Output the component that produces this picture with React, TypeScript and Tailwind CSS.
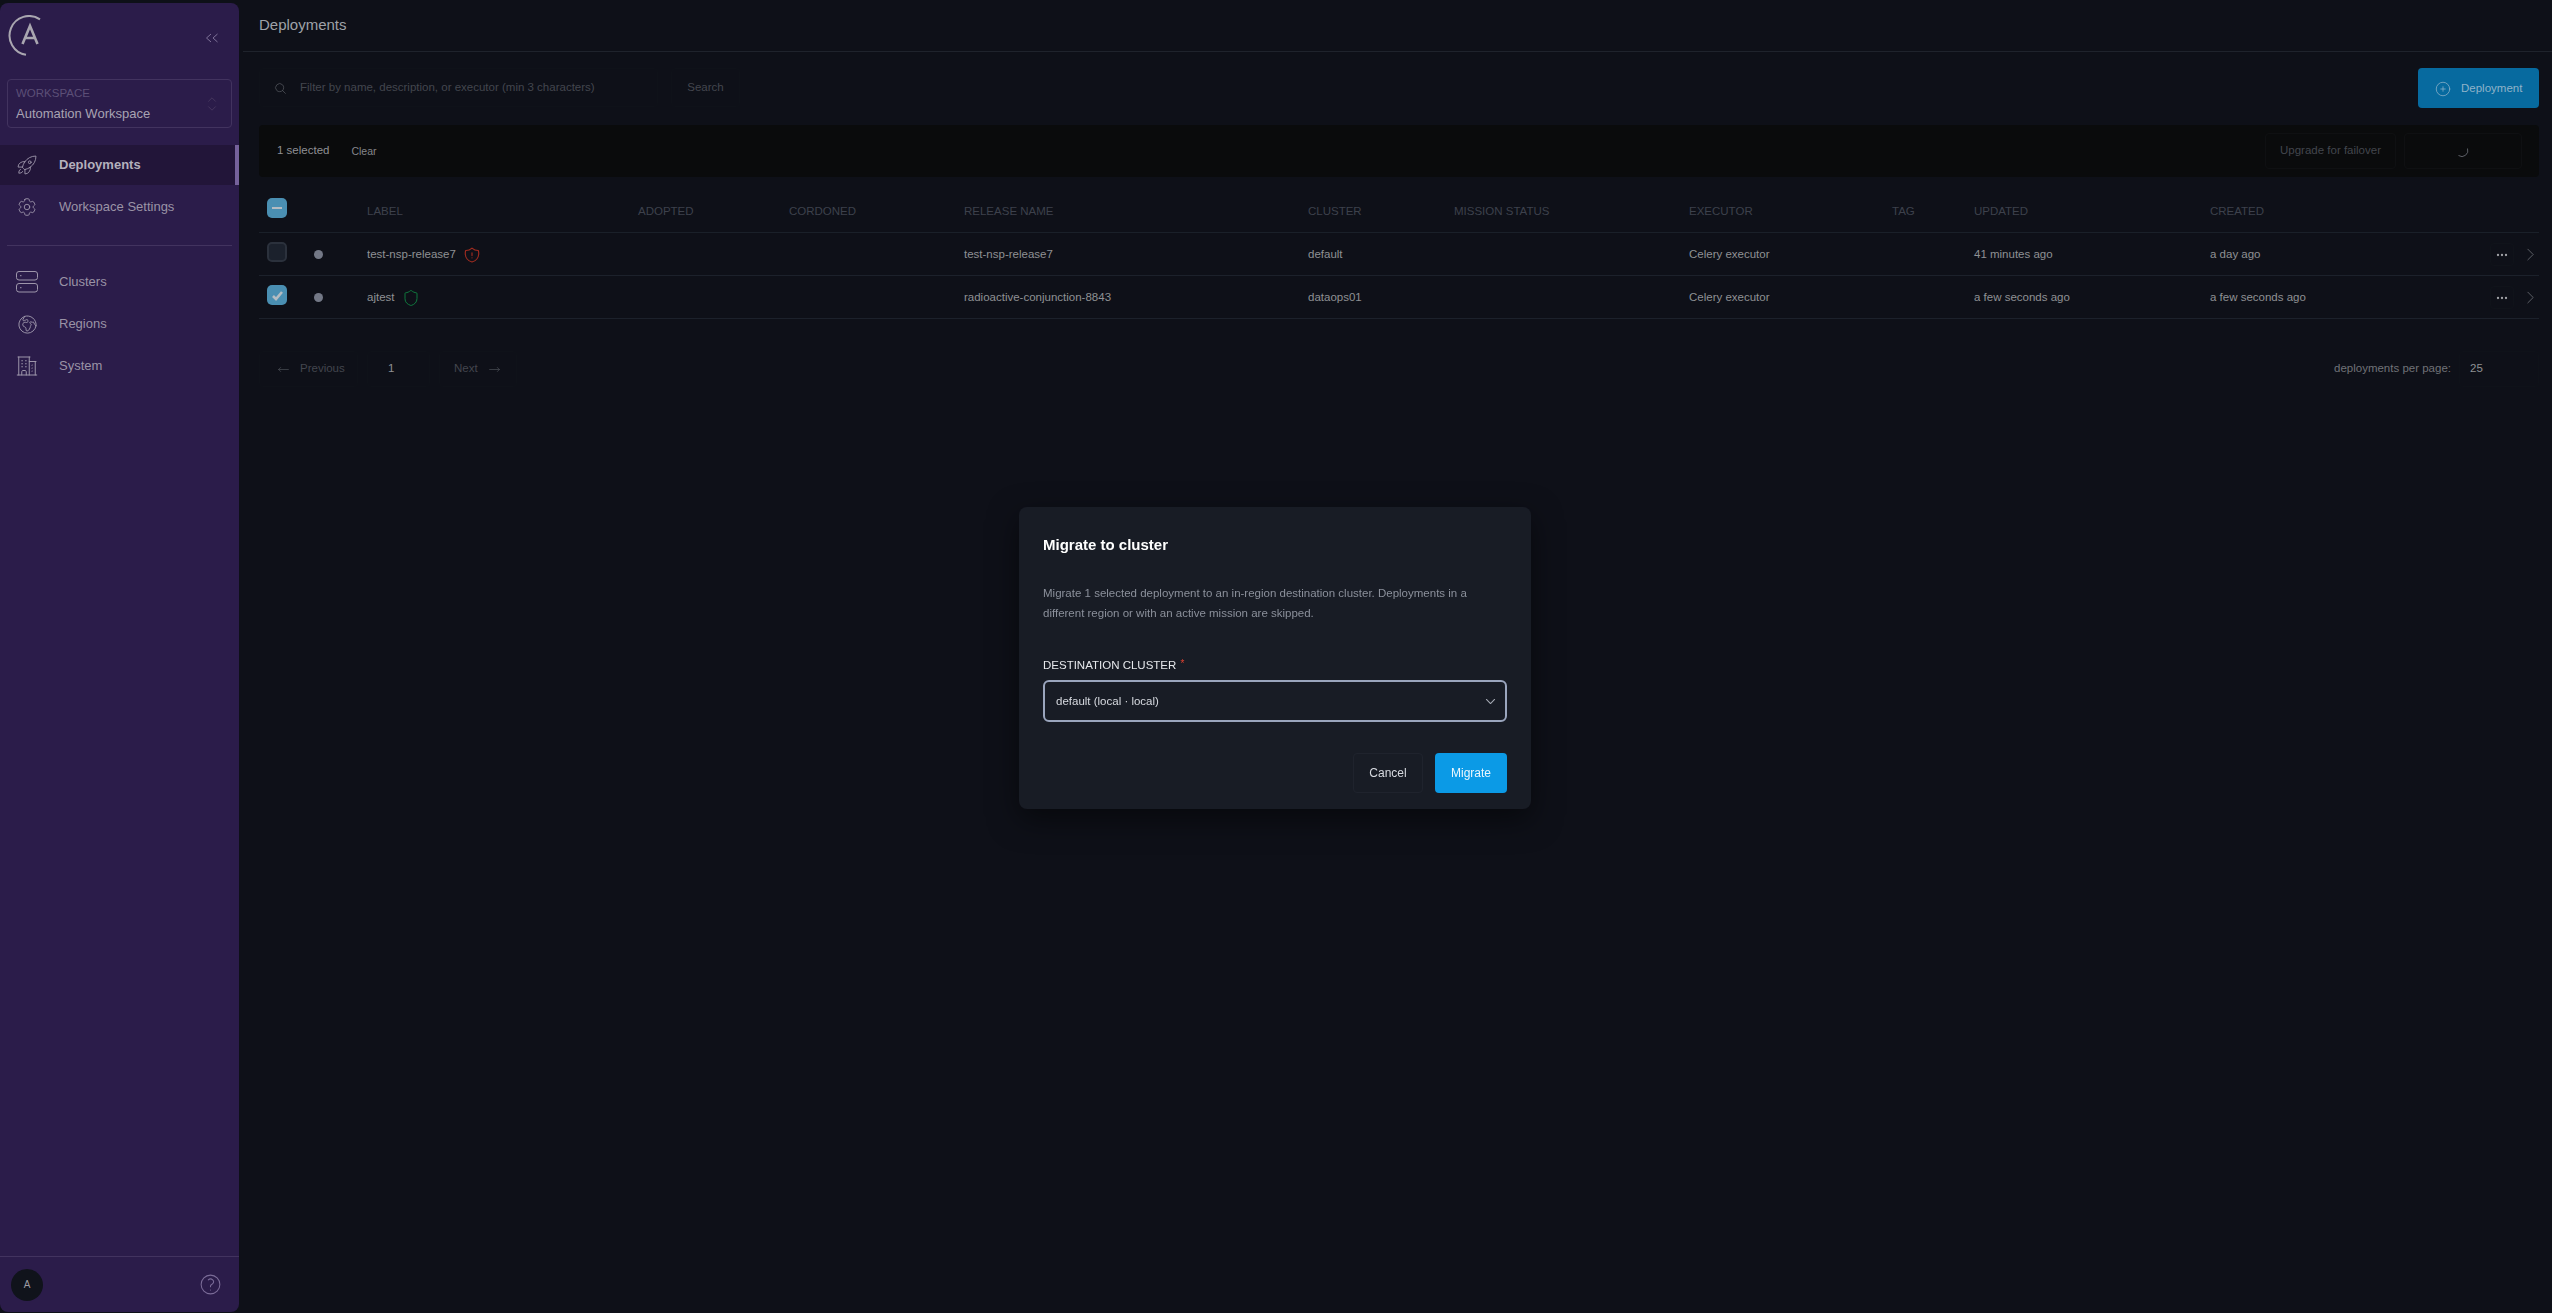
import React from 'react';
import { Shield } from 'lucide-react';
import {
  HiOutlineArrowLongLeft,
  HiOutlineArrowLongRight,
  HiOutlineBuildingOffice2,
  HiOutlineChevronDown,
  HiOutlineChevronRight,
  HiOutlineChevronUpDown,
  HiOutlineCog6Tooth,
  HiOutlineEllipsisHorizontal,
  HiOutlineGlobeEuropeAfrica,
  HiOutlineMagnifyingGlass,
  HiOutlinePlusCircle,
  HiOutlineQuestionMarkCircle,
  HiOutlineRocketLaunch,
  HiOutlineShieldExclamation,
} from 'react-icons/hi2';

const gridCols = 'grid grid-cols-[108px_271px_151px_175px_344px_146px_235px_203px_82px_236px_1fr]';

const Logo: React.FC = () => (
  <svg width="34" height="42" viewBox="8 14 34 42" fill="none" stroke="#a9a6b0" strokeWidth="2" className="ml-2">
    <path d="M40 18.400A19.500 19.500 0 1 0 26 53.800" />
    <path strokeWidth="2.600" d="M22.500 43 30 25l7.500 18M25 37h10" />
  </svg>
);

const ServerIcon: React.FC = () => (
  <svg width="24" height="24" viewBox="0 0 24 24" fill="none" stroke="currentColor" strokeWidth="1">
    <rect x="1.500" y="1.500" width="21" height="8.500" rx="2.500" />
    <rect x="1.500" y="13.500" width="21" height="8.500" rx="2.500" />
    <path d="M5 5.700h1.500M5 17.700h1.500" />
  </svg>
);

const CollapseIcon: React.FC = () => (
  <svg width="14" height="10" viewBox="0 0 14 10" fill="none" stroke="#7f7299" strokeWidth="1" className="mt-1">
    <path d="M6 1 1.500 5 6 9M12.500 1 8 5l4.500 4" />
  </svg>
);

interface NavItemProps {
  icon: React.ReactNode;
  label: string;
  active?: boolean;
}

const NavItem: React.FC<NavItemProps> = ({ icon, label, active = false }) => (
  <div
    className={`relative flex h-10 items-center text-[13px] ${
      active ? 'bg-[#221539] font-bold text-[#b4b0bc]' : 'text-[#9a93a6]'
    }`}
  >
    <span className="flex w-[59px] justify-center pr-[5px] text-[#9d95aa]">{icon}</span>
    {label}
    {active && <span className="absolute right-0 top-0 h-full w-1 bg-[#75619b]" />}
  </div>
);

const Sidebar: React.FC = () => (
  <aside className="mb-[1px] mt-[3px] flex w-[239px] shrink-0 flex-col rounded-lg bg-[#2b1c4a] pt-3">
    <div className="flex items-center justify-between pr-[20px]">
      <Logo />
      <CollapseIcon />
    </div>
    <div className="mx-[7px] mt-[22px] flex h-[49px] items-center justify-between rounded border border-[#42335f] px-2">
      <div>
        <div className="text-[11.500px] leading-[16px] text-[#5c4f77]">WORKSPACE</div>
        <div className="mt-1 text-[13px] leading-[18px] text-[#a8a3b2]">Automation Workspace</div>
      </div>
      <HiOutlineChevronUpDown className="text-[#47385f]" size={22} strokeWidth={1} />
    </div>
    <nav className="mt-[17px] flex flex-col gap-[2px]">
      <NavItem active icon={<HiOutlineRocketLaunch size={22} strokeWidth={1} />} label="Deployments" />
      <NavItem icon={<HiOutlineCog6Tooth size={22} strokeWidth={1} />} label="Workspace Settings" />
    </nav>
    <div className="mx-[7px] mb-4 mt-[18px] border-t border-[#42335f]" />
    <nav className="flex flex-col gap-[2px]">
      <NavItem icon={<ServerIcon />} label="Clusters" />
      <NavItem icon={<HiOutlineGlobeEuropeAfrica size={23} strokeWidth={1} />} label="Regions" />
      <NavItem icon={<HiOutlineBuildingOffice2 size={24} strokeWidth={1} />} label="System" />
    </nav>
    <div className="mt-auto flex h-[56px] items-center justify-between border-t border-[#42335f] pl-[11px] pr-4">
      <div className="flex h-8 w-8 items-center justify-center rounded-full bg-[#10131b] text-[10px] text-[#9c9ca2]">A</div>
      <HiOutlineQuestionMarkCircle className="text-[#7b6c98]" size={25} strokeWidth={1} />
    </div>
  </aside>
);

const HeaderCell: React.FC<{ children?: React.ReactNode }> = ({ children }) => (
  <div className="pt-[1px] text-[11.500px] text-[#3d414c]">{children}</div>
);

interface RowData {
  label: string;
  ok: boolean;
  checked: boolean;
  release: string;
  cluster: string;
  updated: string;
  created: string;
}

const rows: RowData[] = [
  {
    label: 'test-nsp-release7',
    ok: false,
    checked: false,
    release: 'test-nsp-release7',
    cluster: 'default',
    updated: '41 minutes ago',
    created: 'a day ago',
  },
  {
    label: 'ajtest',
    ok: true,
    checked: true,
    release: 'radioactive-conjunction-8843',
    cluster: 'dataops01',
    updated: 'a few seconds ago',
    created: 'a few seconds ago',
  },
];

const Row: React.FC<{ row: RowData }> = ({ row }) => (
  <div className={`${gridCols} h-[43px] items-center border-b border-[#1c212b] pt-[1px] text-[11.500px] text-[#8f9094]`}>
    <div className="flex items-center">
      {row.checked ? (
        <span className="mb-[5px] ml-2 flex h-5 w-5 items-center justify-center rounded-[5px] bg-[#4a8fb2]">
          <svg width="13" height="13" viewBox="0 0 13 13" fill="none" stroke="#b5bcc2" strokeWidth="2.600">
            <path d="m2 7 3 3 6-7" />
          </svg>
        </span>
      ) : (
        <span className="mb-[5px] ml-2 h-5 w-5 rounded-[5px] border-2 border-[#2b313c] bg-[#1b212c]" />
      )}
      <span className="mb-[1px] ml-[27px] h-[9px] w-[9px] rounded-full bg-[#737886]" />
    </div>
    <div className="flex items-center gap-[7px]">
      {row.label}
      {row.ok ? (
        <Shield className="text-[#0f7a3f]" size={18} strokeWidth={1.300} />
      ) : (
        <HiOutlineShieldExclamation className="text-[#a32c20]" size={18} strokeWidth={1.500} />
      )}
    </div>
    <div />
    <div />
    <div>{row.release}</div>
    <div>{row.cluster}</div>
    <div />
    <div>Celery executor</div>
    <div />
    <div>{row.updated}</div>
    <div className="flex items-center justify-between">
      {row.created}
      <div className="flex items-center">
        <span className="flex h-[23px] w-6 items-center justify-center rounded border border-[#10131a] text-[#a5a6aa]">
          <HiOutlineEllipsisHorizontal size={16} strokeWidth={2} />
        </span>
        <HiOutlineChevronRight className="ml-2 text-[#7b7e85]" size={17} strokeWidth={1} />
      </div>
    </div>
  </div>
);

const Main: React.FC = () => (
  <main className="ml-1 flex min-w-0 flex-1 flex-col">
    <header className="flex h-[52px] items-center border-b border-[#1f232c] pl-4 text-[15px] text-[#9fa2a8]">Deployments</header>
    <div className="pl-4 pr-[13px]">
      <div className="mt-4 flex items-start">
        <div className="flex h-[39px] w-[399px] items-center rounded border border-[#0f1219] pl-[14px] pt-[1px] text-[11.500px] text-[#43464e]">
          <HiOutlineMagnifyingGlass className="mr-[13px] text-[#4d5058]" size={13} strokeWidth={1.500} />
          Filter by name, description, or executor (min 3 characters)
        </div>
        <div className="ml-[13px] flex h-[39px] w-[69px] items-center justify-center rounded border border-[#0f1219] pt-[1px] text-[11.500px] text-[#43464e]">Search</div>
        <button className="ml-auto flex h-10 w-[121px] items-center rounded bg-[#076a9f] pl-4 pt-[1px] text-[11.500px] text-[#8fb3c9]">
          <HiOutlinePlusCircle className="mr-[9px] text-[#8fb3c9]" size={18} strokeWidth={1} />
          Deployment
        </button>
      </div>
      <div className="mt-[17px] flex h-[52px] items-center rounded bg-[#0a0b0c] pl-[18px] pr-[17px] text-[11.500px]">
        <span className="text-[#8f9094]">1 selected</span>
        <span className="ml-[22px] mt-[2px] text-[10.500px] text-[#85868a]">Clear</span>
        <div className="ml-auto flex h-9 w-[131px] items-center justify-center rounded border border-[#0f1012] text-[#43464c]">Upgrade for failover</div>
        <div className="ml-2 flex h-9 w-[118px] items-center justify-center rounded border border-[#0f1012]">
          <svg width="14" height="14" viewBox="0 0 14 14" fill="none" stroke="#5c5f66" strokeWidth="1">
            <path d="M2.500 11.500a6 6 0 0 0 9-7" />
          </svg>
        </div>
      </div>
      <div className="mt-[13px]">
        <div className={`${gridCols} h-[43px] items-center border-b border-[#1a2029]`}>
          <div>
            <span className="mb-[6px] ml-2 flex h-5 w-5 items-center justify-center rounded-[5px] bg-[#4a8fb2]">
              <span className="h-[2px] w-[10px] bg-[#b5bcc2]" />
            </span>
          </div>
          <HeaderCell>LABEL</HeaderCell>
          <HeaderCell>ADOPTED</HeaderCell>
          <HeaderCell>CORDONED</HeaderCell>
          <HeaderCell>RELEASE NAME</HeaderCell>
          <HeaderCell>CLUSTER</HeaderCell>
          <HeaderCell>MISSION STATUS</HeaderCell>
          <HeaderCell>EXECUTOR</HeaderCell>
          <HeaderCell>TAG</HeaderCell>
          <HeaderCell>UPDATED</HeaderCell>
          <HeaderCell>CREATED</HeaderCell>
        </div>
        {rows.map(row => (
          <Row key={row.label} row={row} />
        ))}
      </div>
      <div className="mt-[32px] flex h-[36px] items-center text-[11.500px] text-[#43464e]">
        <div className="flex h-full w-[99px] items-center rounded border border-[#0f1219] pl-[17px]">
          <HiOutlineArrowLongLeft className="mr-[10px]" size={13} />
          Previous
        </div>
        <div className="ml-[9px] flex h-full w-[63px] items-center rounded border border-[#0f1219] pl-[20px] text-[#8f9094]">1</div>
        <div className="ml-[9px] flex h-full w-[78px] items-center rounded border border-[#0f1219] pl-[14px]">
          Next
          <HiOutlineArrowLongRight className="ml-[10px]" size={13} />
        </div>
        <span className="ml-auto mr-2 text-[#707277]">deployments per page:</span>
        <div className="flex h-full w-20 items-center rounded border border-[#0f1219] pl-[10px] text-[#8f9094]">25</div>
      </div>
    </div>
  </main>
);

const MigrateDialog: React.FC = () => (
  <div className="fixed inset-0 flex items-center justify-center pr-[2px] pt-[2px]">
    <div className="w-[512px] rounded-lg bg-[#181c25] px-6 pb-4 pt-6 shadow-[0_10px_30px_rgba(0,0,0,0.5)]">
      <h2 className="text-[15px] font-bold leading-7 text-white">Migrate to cluster</h2>
      <p className="mt-6 text-[11.500px] leading-5 text-[#8b909b]">
        Migrate 1 selected deployment to an in-region destination cluster. Deployments in a different region or with an active mission are skipped.
      </p>
      <label className="mt-8 block text-[11.500px] leading-5 text-[#e5e7eb]">
        DESTINATION CLUSTER <span className="relative -top-[2px] ml-[1px] text-[10px] text-[#e0402f]">*</span>
      </label>
      <div className="mt-1 flex h-[42px] items-center justify-between rounded-md border-2 border-[#9aa5bd] pl-[11px] pr-2 pt-[2px] text-[11.500px] text-[#d7dae0]">
        default (local · local)
        <HiOutlineChevronDown className="text-[#a4a9b3]" size={13} strokeWidth={2} />
      </div>
      <div className="mt-[31px] flex justify-end">
        <button className="h-10 w-[70px] rounded border border-[#1f232d] text-[12px] text-[#d7dae0]">Cancel</button>
        <button className="ml-3 h-10 w-[72px] rounded bg-[#0b9ae6] text-[12px] text-[#eaf6fd]">Migrate</button>
      </div>
    </div>
  </div>
);

export default function App() {
  return (
    <div className="flex h-screen overflow-hidden bg-[#0e1018] font-['Liberation_Sans',Arial,sans-serif]">
      <Sidebar />
      <Main />
      <MigrateDialog />
    </div>
  );
}
